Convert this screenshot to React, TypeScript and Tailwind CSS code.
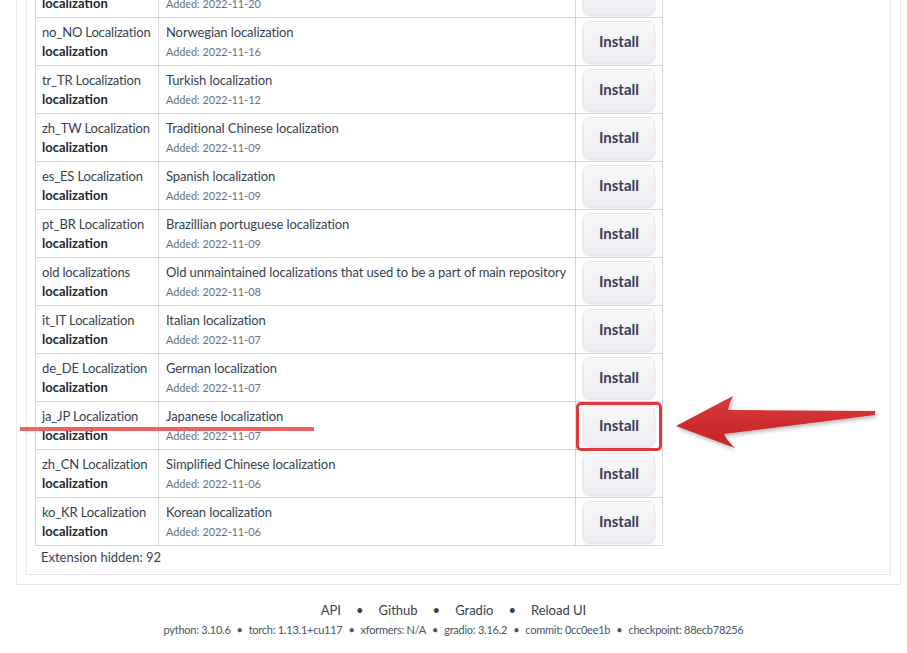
import React from "react";

type Ext = { name: string; desc: string; added: string };

const extensions: Ext[] = [
  { name: "fr_FR Localization", desc: "French localization", added: "2022-11-20" },
  { name: "no_NO Localization", desc: "Norwegian localization", added: "2022-11-16" },
  { name: "tr_TR Localization", desc: "Turkish localization", added: "2022-11-12" },
  { name: "zh_TW Localization", desc: "Traditional Chinese localization", added: "2022-11-09" },
  { name: "es_ES Localization", desc: "Spanish localization", added: "2022-11-09" },
  { name: "pt_BR Localization", desc: "Brazillian portuguese localization", added: "2022-11-09" },
  { name: "old localizations", desc: "Old unmaintained localizations that used to be a part of main repository", added: "2022-11-08" },
  { name: "it_IT Localization", desc: "Italian localization", added: "2022-11-07" },
  { name: "de_DE Localization", desc: "German localization", added: "2022-11-07" },
  { name: "ja_JP Localization", desc: "Japanese localization", added: "2022-11-07" },
  { name: "zh_CN Localization", desc: "Simplified Chinese localization", added: "2022-11-06" },
  { name: "ko_KR Localization", desc: "Korean localization", added: "2022-11-06" },
];

const footerInfo = [
  "python: 3.10.6",
  "torch: 1.13.1+cu117",
  "xformers: N/A",
  "gradio: 3.16.2",
  "commit: 0cc0ee1b",
  "checkpoint: 88ecb78256",
];

function Row({ ext }: { ext: Ext }) {
  return (
    <tr className="h-[48px]">
      <td className="border border-[#d4d6da] px-[6px] pt-[5px] align-top whitespace-nowrap">
        <div className="leading-[19px] text-[13px] tracking-[-0.15px] text-[#374151]">{ext.name}</div>
        <div className="leading-[19px] text-[13px] font-bold text-[#1f2937]">localization</div>
      </td>
      <td className="border border-[#d4d6da] px-[7px] pt-[5px] align-top whitespace-nowrap">
        <div className="leading-[19px] text-[13px] tracking-[-0.1px] text-[#374151]">{ext.desc}</div>
        <div className="leading-[19px] text-[11px] tracking-[-0.1px] text-[#6b7280]">Added: {ext.added}</div>
      </td>
      <td className="border border-[#d4d6da] pl-[7px] pr-[7px] align-middle">
        <button
          type="button"
          className="flex h-[42px] w-[72px] items-center justify-center rounded-[7px] border border-[#e5e7eb] bg-gradient-to-b from-[#f7f8f9] to-[#eceef1] text-[15px] font-bold text-[#374151] shadow-sm"
        >
          Install
        </button>
      </td>
    </tr>
  );
}

export default function App() {
  return (
    <div className="relative h-[653px] w-[907px] overflow-hidden bg-white font-['Lato','Noto_Sans',sans-serif]">
      <div className="mt-[-50px] ml-[16px] w-[885px] border border-[#e5e7eb] p-[9px]">
        <div className="border border-[#e5e7eb] px-[8px] pt-[8px] pb-[8px]">
          <table className="w-[627px] table-fixed border-collapse">
            <colgroup>
              <col className="w-[123px]" />
              <col className="w-[417px]" />
              <col className="w-[87px]" />
            </colgroup>
            <tbody>
              {extensions.map((ext) => (
                <Row key={ext.name} ext={ext} />
              ))}
            </tbody>
          </table>
          <div className="mt-[2px] pl-[6px] text-[13px] leading-[18px] text-[#374151]">
            Extension hidden: 92
          </div>
        </div>
      </div>

      <div className="mt-[16px] flex items-center justify-center gap-[15px] text-[13px] leading-[18px] text-[#374151]">
        <span>API</span>
        <span>•</span>
        <span>Github</span>
        <span>•</span>
        <span>Gradio</span>
        <span>•</span>
        <span>Reload UI</span>
      </div>
      <div className="mt-[3px] flex items-center justify-center gap-[6px] text-[11px] leading-[16px] tracking-[-0.25px] text-[#4b5563]">
        {footerInfo.map((t, i) => (
          <React.Fragment key={t}>
            {i > 0 && <span>•</span>}
            <span>{t}</span>
          </React.Fragment>
        ))}
      </div>

      {/* annotations */}
      <div className="absolute left-[20px] top-[427px] h-[4px] w-[294px] bg-[#f06262]" />
      <div className="absolute left-[576px] top-[402px] h-[49px] w-[86px] rounded-[5px] border-[3px] border-[#e0393b]" />
      <svg className="absolute left-0 top-0" width="907" height="653" viewBox="0 0 907 653">
        <defs>
          <linearGradient id="arr" x1="0" y1="0" x2="0" y2="1">
            <stop offset="0" stopColor="#d9383a" />
            <stop offset="1" stopColor="#c42326" />
          </linearGradient>
          <filter id="sh" x="-10%" y="-30%" width="120%" height="160%">
            <feDropShadow dx="1" dy="2" stdDeviation="2" floodColor="#000" floodOpacity="0.3" />
          </filter>
        </defs>
        <path
          d="M676 426 L733 396 Q729 403 728 410 L875 411 L875 415 L724 434 Q727 441 735 448 Z"
          fill="url(#arr)"
          filter="url(#sh)"
        />
      </svg>
    </div>
  );
}
